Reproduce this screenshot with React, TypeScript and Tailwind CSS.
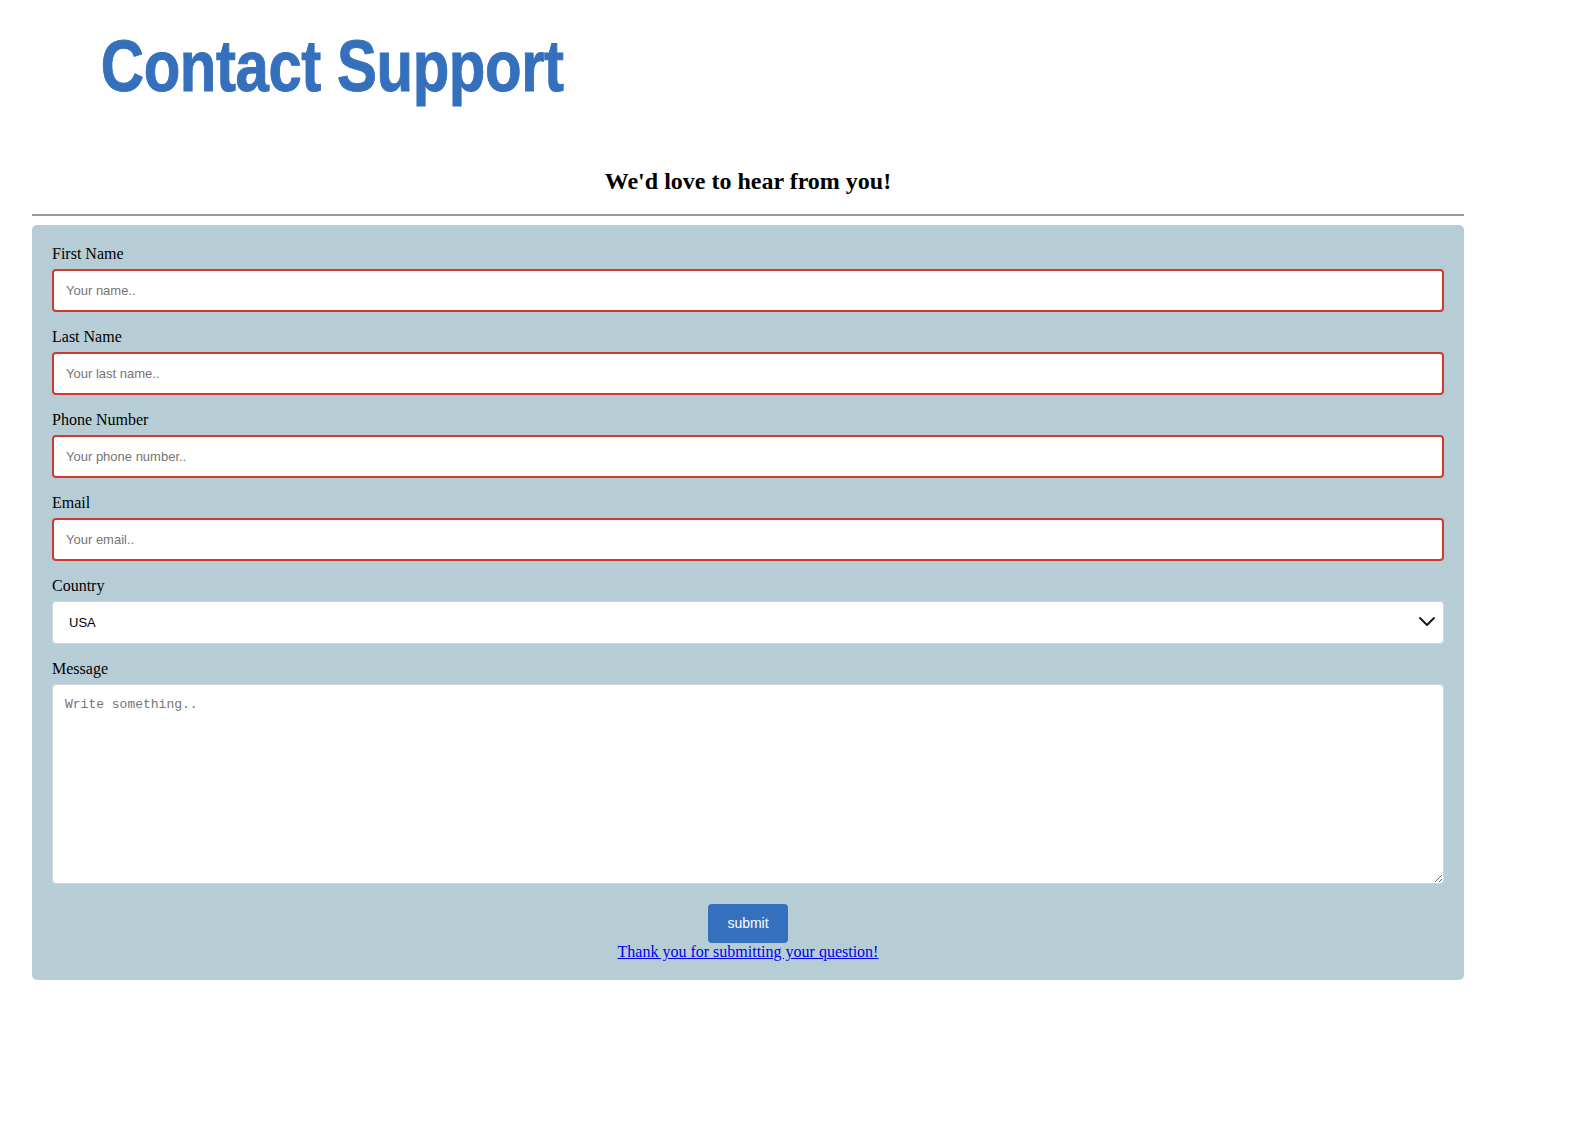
import React from 'react';

const serif = { fontFamily: '"Liberation Serif", "Times New Roman", serif' };

const Field: React.FC<{ label: string; placeholder: string }> = ({ label, placeholder }) => (
  <div>
    <label className="block h-[18px] text-[16px] leading-[18px] text-black" style={serif}>
      {label}
    </label>
    <input
      type="text"
      placeholder={placeholder}
      className="mt-[6px] mb-[16px] block h-[43px] w-full rounded-[4px] border-2 border-[#d2382e] bg-white px-[12px] font-['Liberation_Sans',Arial,sans-serif] text-[13px] text-black outline-none placeholder:text-[#757575]"
    />
  </div>
);

const App: React.FC = () => {
  return (
    <div className="min-h-[1144px] w-full bg-white">
      <h1 className="origin-left scale-x-[0.82] pl-[123px] pt-[30px] font-['Liberation_Sans_Narrow','Arial_Narrow','Liberation_Sans',sans-serif] text-[73px] font-bold leading-[72px] tracking-[-0.5px] text-[#3570bd] [-webkit-text-stroke:1px_#3570bd]">
        Contact Support
      </h1>

      <div className="ml-[32px] w-[1432px]">
        <h2 className="mt-[66px] text-center text-[24px] font-bold leading-[27px] text-black" style={serif}>
          We'd love to hear from you!
        </h2>
        <hr className="mt-[19px] border-t-2 border-[#9b9b9b]" />

        <form className="mt-[9px] rounded-[5px] bg-[#b7cdd6] px-[20px] pt-[20px] pb-[19px]" onSubmit={e => e.preventDefault()}>
          <Field label="First Name" placeholder="Your name.." />
          <Field label="Last Name" placeholder="Your last name.." />
          <Field label="Phone Number" placeholder="Your phone number.." />
          <Field label="Email" placeholder="Your email.." />

          <label className="block h-[18px] text-[16px] leading-[18px] text-black" style={serif}>
            Country
          </label>
          <div className="relative mt-[6px] mb-[16px]">
            <select
              defaultValue="usa"
              className="block h-[43px] w-full appearance-none rounded-[4px] border border-[#d0d6d9] bg-white pl-[16px] font-['Liberation_Sans',Arial,sans-serif] text-[13px] text-black outline-none"
            >
              <option value="usa">USA</option>
              <option value="canada">Canada</option>
              <option value="mexico">Mexico</option>
            </select>
            <svg
              className="pointer-events-none absolute right-[8px] top-[14px]"
              width="18"
              height="12"
              viewBox="0 0 18 12"
              fill="none"
              stroke="#111"
              strokeWidth="1.8"
              strokeLinecap="round"
              strokeLinejoin="round"
            >
              <path d="M2 3l7 7 7-7" />
            </svg>
          </div>

          <label className="block h-[18px] text-[16px] leading-[18px] text-black" style={serif}>
            Message
          </label>
          <textarea
            placeholder="Write something.."
            className="mt-[6px] block h-[200px] w-full resize-y rounded-[4px] border border-[#d0d6d9] bg-white px-[12px] py-[12px] font-['Liberation_Mono','Courier_New',monospace] text-[13px] leading-[16px] text-black outline-none placeholder:text-[#757575]"
          />

          <div className="mt-[20px] flex flex-col items-center">
            <button
              type="submit"
              className="h-[39px] w-[80px] rounded-[4px] bg-[#3470bd] font-['Liberation_Sans',Arial,sans-serif] text-[14px] text-white"
            >
              submit
            </button>
            <a href="#" className="block text-[16px] leading-[18px] text-[#0000ee] underline" style={serif}>
              Thank you for submitting your question!
            </a>
          </div>
        </form>
      </div>
    </div>
  );
};

export default App;
